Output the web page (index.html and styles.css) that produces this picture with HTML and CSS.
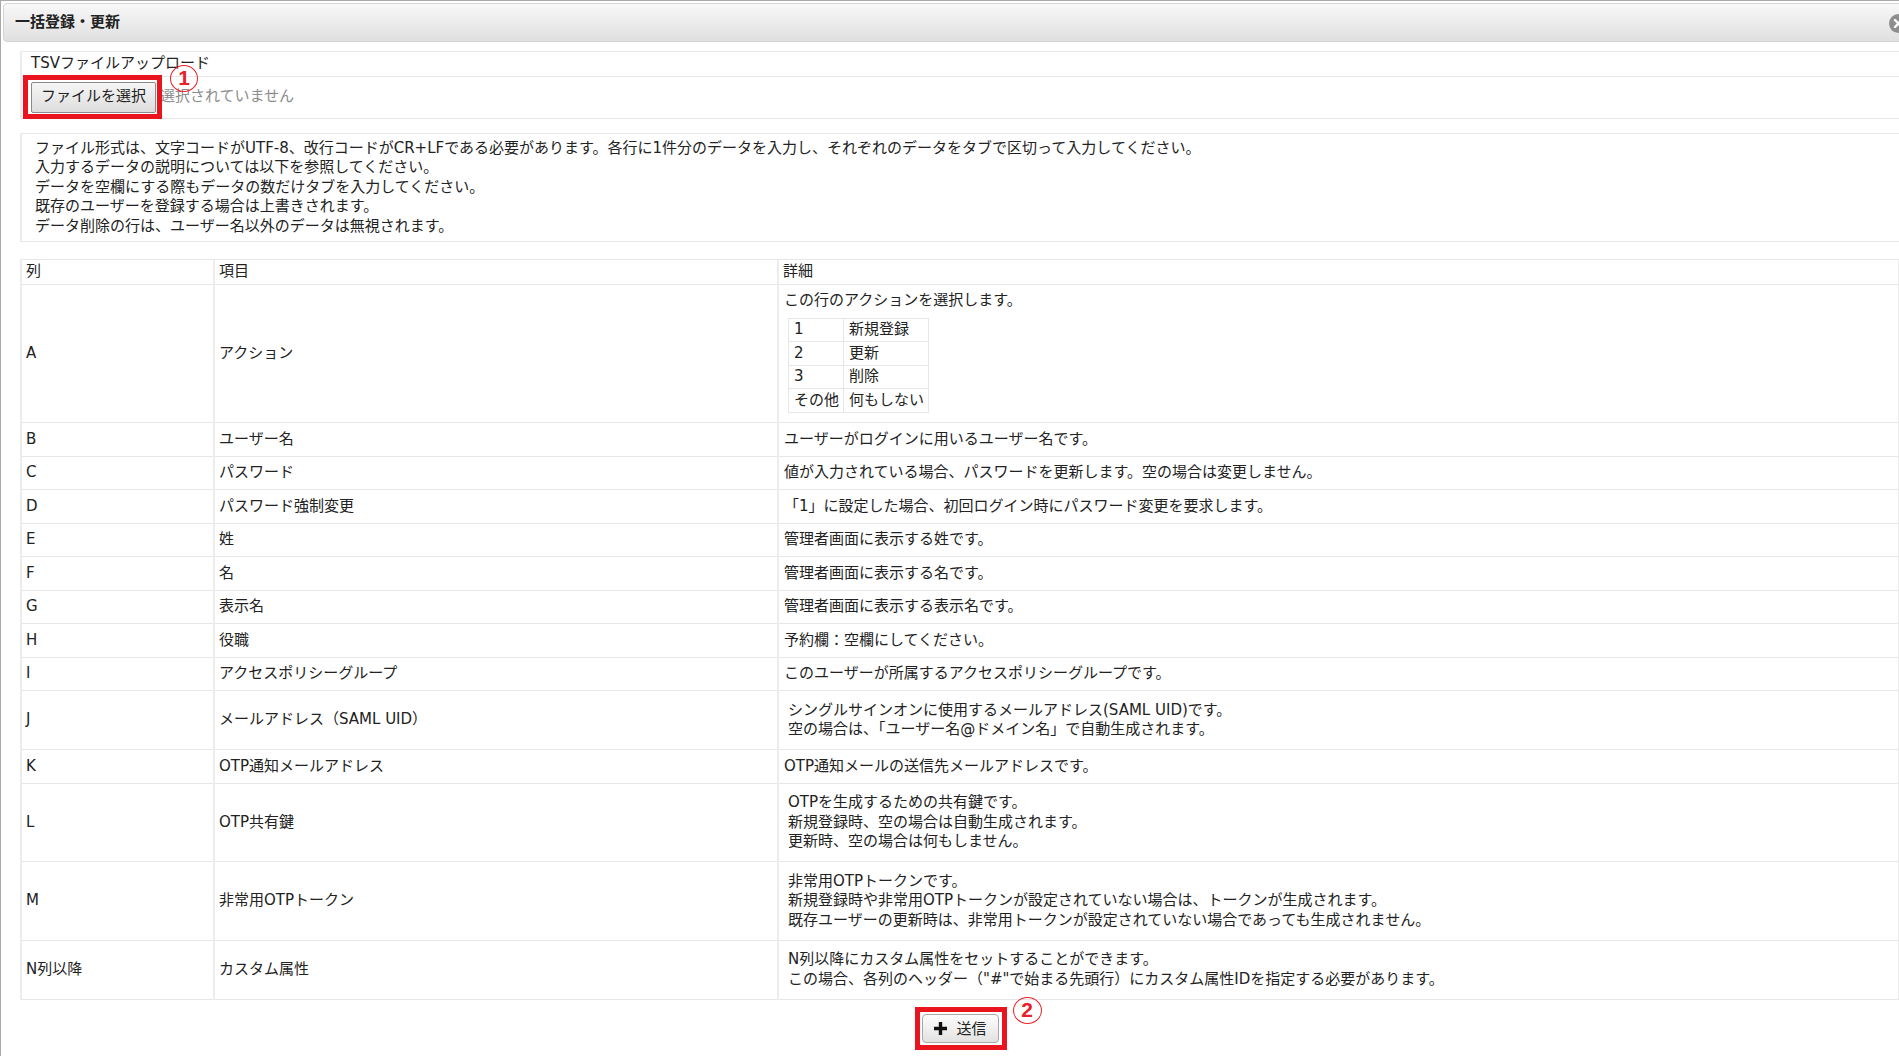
FILE: index.html
```html
<!DOCTYPE html>
<html lang="ja">
<head>
<meta charset="utf-8">
<title>一括登録・更新</title>
<link rel="stylesheet" href="styles.css">
</head>
<body>
<div class="dialog">
  <div class="titlebar">
    <span class="title">一括登録・更新</span>
    <span class="close">
      <svg width="19" height="19" viewBox="0 0 19 19"><circle cx="9.5" cy="9.5" r="9.5" fill="#8e8e8e"/><path d="M6 6l7 7M13 6l-7 7" stroke="#fff" stroke-width="2.4" stroke-linecap="round"/></svg>
    </span>
  </div>
  <div class="content">
    <table class="upload">
      <tr><td>TSVファイルアップロード</td></tr>
      <tr class="file-row"><td>
        <div class="file">
          <span class="file-btn">ファイルを選択</span><span class="file-none">選択されていません</span>
          <span class="mark mark-file"></span>
          <span class="num num-1">1</span>
        </div>
      </td></tr>
    </table>

    <div class="note">
      ファイル形式は、文字コードがUTF-8、改行コードがCR+LFである必要があります。各行に1件分のデータを入力し、それぞれのデータをタブで区切って入力してください。<br>
      入力するデータの説明については以下を参照してください。<br>
      データを空欄にする際もデータの数だけタブを入力してください。<br>
      既存のユーザーを登録する場合は上書きされます。<br>
      データ削除の行は、ユーザー名以外のデータは無視されます。
    </div>

    <table class="spec">
      <colgroup><col class="c1"><col class="c2"><col class="c3"></colgroup>
      <thead>
        <tr><th>列</th><th>項目</th><th>詳細</th></tr>
      </thead>
      <tbody>
        <tr>
          <td>A</td><td>アクション</td>
          <td>この行のアクションを選択します。
            <table class="opts">
              <tr><td>1</td><td>新規登録</td></tr>
              <tr><td>2</td><td>更新</td></tr>
              <tr><td>3</td><td>削除</td></tr>
              <tr><td>その他</td><td>何もしない</td></tr>
            </table>
          </td>
        </tr>
        <tr><td>B</td><td>ユーザー名</td><td>ユーザーがログインに用いるユーザー名です。</td></tr>
        <tr><td>C</td><td>パスワード</td><td>値が入力されている場合、パスワードを更新します。空の場合は変更しません。</td></tr>
        <tr><td>D</td><td>パスワード強制変更</td><td>「1」に設定した場合、初回ログイン時にパスワード変更を要求します。</td></tr>
        <tr><td>E</td><td>姓</td><td>管理者画面に表示する姓です。</td></tr>
        <tr><td>F</td><td>名</td><td>管理者画面に表示する名です。</td></tr>
        <tr><td>G</td><td>表示名</td><td>管理者画面に表示する表示名です。</td></tr>
        <tr><td>H</td><td>役職</td><td>予約欄：空欄にしてください。</td></tr>
        <tr><td>I</td><td>アクセスポリシーグループ</td><td>このユーザーが所属するアクセスポリシーグループです。</td></tr>
        <tr><td>J</td><td>メールアドレス（SAML UID）</td><td><div class="multi">シングルサインオンに使用するメールアドレス(SAML UID)です。<br>空の場合は、「ユーザー名@ドメイン名」で自動生成されます。</div></td></tr>
        <tr><td>K</td><td>OTP通知メールアドレス</td><td>OTP通知メールの送信先メールアドレスです。</td></tr>
        <tr><td>L</td><td>OTP共有鍵</td><td><div class="multi">OTPを生成するための共有鍵です。<br>新規登録時、空の場合は自動生成されます。<br>更新時、空の場合は何もしません。</div></td></tr>
        <tr><td>M</td><td>非常用OTPトークン</td><td><div class="multi">非常用OTPトークンです。<br>新規登録時や非常用OTPトークンが設定されていない場合は、トークンが生成されます。<br>既存ユーザーの更新時は、非常用トークンが設定されていない場合であっても生成されません。</div></td></tr>
        <tr><td>N列以降</td><td>カスタム属性</td><td><div class="multi">N列以降にカスタム属性をセットすることができます。<br>この場合、各列のヘッダー（"#"で始まる先頭行）にカスタム属性IDを指定する必要があります。</div></td></tr>
      </tbody>
    </table>

    <div class="actions">
      <div class="submit-wrap">
        <button class="submit" type="button">
          <svg width="15" height="15" viewBox="0 0 15 15"><path d="M5.8 1h3.4v4.8H14v3.4H9.2V14H5.8V9.2H1V5.8h4.8z" fill="#111"/></svg>
          <span>送信</span>
        </button>
        <span class="mark mark-submit"></span>
        <span class="num num-2">2</span>
      </div>
    </div>
  </div>
</div>
</body>
</html>
```

FILE: styles.css
```css
html, body {
  margin: 0;
  padding: 0;
}

body {
  width: 1899px;
  height: 1056px;
  overflow: hidden;
  background: #fff;
  color: #222;
  font-family: "DejaVu Sans", "Noto Sans CJK JP", sans-serif;
  font-size: 15px;
  line-height: 19.5px;
}

.dialog {
  width: 1920px;
  min-height: 1100px;
  box-sizing: border-box;
  border: 1px solid #a9a9a9;
  padding: 2px;
  background: #fff;
}

.titlebar {
  position: relative;
  height: 39px;
  box-sizing: border-box;
  border: 1px solid #d4d4d4;
  border-radius: 4px;
  background: linear-gradient(#f8f8f8, #e0e0e0);
  display: flex;
  align-items: center;
  padding-left: 11px;
}

.title {
  font-weight: bold;
  font-size: 15px;
  color: #222;
}

.close {
  position: absolute;
  right: 8px;
  top: 10px;
  width: 19px;
  height: 19px;
  display: block;
}

.close svg {
  display: block;
}

.content {
  padding: 9px 17px 0;
}

/* upload table */
.upload {
  width: 100%;
  border-collapse: collapse;
}

.upload td {
  border-top: 1px solid #e6e6e6;
  border-bottom: 1px solid #e6e6e6;
  border-left: 2px solid #ececec;
  padding: 2px 9px;
}

.upload .file-row td {
  padding: 5px 9px;
}

.file {
  position: relative;
  display: inline-flex;
  align-items: center;
}

.file-btn {
  display: inline-flex;
  align-items: center;
  height: 31px;
  box-sizing: border-box;
  padding: 0 9px;
  border: 1px solid #8a8a8a;
  border-radius: 2px;
  background: linear-gradient(#f6f6f6, #dddddd);
  color: #222;
}

.file-none {
  margin-left: 4px;
  color: #8c8c8c;
}

.mark {
  position: absolute;
  box-sizing: border-box;
  border: 5px solid #e9141d;
}

.mark-file {
  left: -8px;
  top: -7px;
  width: 139px;
  height: 44px;
}

.num {
  position: absolute;
  box-sizing: border-box;
  width: 28px;
  height: 27px;
  border: 1.5px solid #e8212a;
  border-radius: 50%;
  color: #e8212a;
  font-family: "Liberation Sans", sans-serif;
  font-weight: bold;
  font-size: 21px;
  line-height: 24px;
  text-align: center;
}

.num-1 {
  left: 139px;
  top: -17px;
}

/* note */
.note {
  margin-top: 14px;
  border: 1px solid #e6e6e6;
  border-left: 2px solid #ececec;
  padding: 5px 13px 5px;
}

/* spec table */
.spec {
  margin-top: 17px;
  width: 100%;
  border-collapse: collapse;
  table-layout: fixed;
}

.c1 { width: 193px; }
.c2 { width: 564px; }

.spec > thead > tr > th,
.spec > tbody > tr > td {
  border-top: 1px solid #e6e6e6;
  border-bottom: 1px solid #e6e6e6;
  border-left: 2px solid #ececec;
  border-right: 2px solid #ececec;
  padding: 6.5px 4px;
  text-align: left;
  font-weight: normal;
  vertical-align: middle;
}

.spec > thead > tr > th {
  padding: 2px 4px;
}

.spec > tbody > tr > td:nth-child(3) {
  padding-left: 5px;
}

.multi {
  padding: 3px 5px 3px 4px;
}

.opts {
  border-collapse: collapse;
  margin: 7px 0 3px 4px;
}

.opts td {
  border: 1px solid #e6e6e6;
  padding: 1.5px 4px 1.5px 5px;
}

/* actions */
.actions {
  display: flex;
  justify-content: center;
  padding-top: 14px;
}

.submit-wrap {
  position: relative;
}

.submit {
  display: flex;
  align-items: center;
  justify-content: center;
  gap: 8px;
  width: 77px;
  height: 29px;
  padding: 0;
  border: 1px solid #a8a8a8;
  border-radius: 4px;
  background: linear-gradient(#fdfdfd, #e2e2e2);
  color: #222;
  font-family: "Noto Sans CJK JP", sans-serif;
  font-size: 15px;
  line-height: 19.5px;
}

.submit svg {
  display: block;
}

.mark-submit {
  left: -7px;
  top: -7px;
  width: 92px;
  height: 43px;
}

.num-2 {
  left: 91px;
  top: -17px;
  width: 29px;
}
```
